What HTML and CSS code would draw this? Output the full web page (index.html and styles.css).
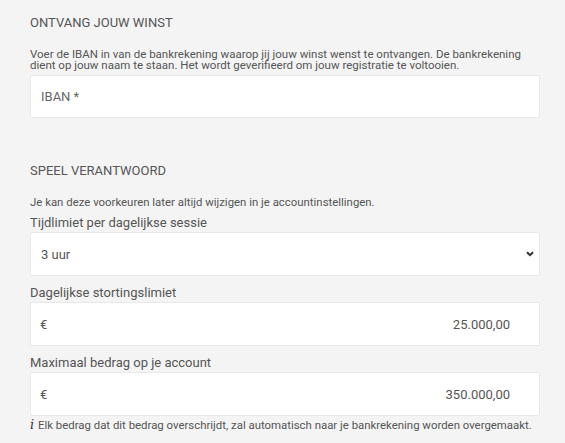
FILE: index.html
```html
<!DOCTYPE html>
<html lang="nl">
<head>
<meta charset="utf-8">
<link rel="stylesheet" href="styles.css">
</head>
<body>
<div class="page">
  <section class="section">
    <h2 class="title">ONTVANG JOUW WINST</h2>
    <p class="desc">Voer de IBAN in van de bankrekening waarop jij jouw winst wenst te ontvangen. De bankrekening dient op jouw naam te staan. Het wordt geverifieerd om jouw registratie te voltooien.</p>
    <div class="field iban"><span class="placeholder">IBAN *</span></div>
  </section>
  <section class="section second">
    <h2 class="title">SPEEL VERANTWOORD</h2>
    <p class="desc one">Je kan deze voorkeuren later altijd wijzigen in je accountinstellingen.</p>
    <label class="label first">Tijdlimiet per dagelijkse sessie</label>
    <div class="field select"><span class="value">3 uur</span>
      <svg class="chev" width="8" height="6" viewBox="0 0 8 6"><path d="M1 1.2l3 3 3-3" fill="none" stroke="#333" stroke-width="2"/></svg>
    </div>
    <label class="label">Dagelijkse stortingslimiet</label>
    <div class="field money"><span class="value">€</span><span class="value">25.000,00</span></div>
    <label class="label">Maximaal bedrag op je account</label>
    <div class="field money"><span class="value">€</span><span class="value">350.000,00</span></div>
    <p class="info"><span class="i">i</span> Elk bedrag dat dit bedrag overschrijdt, zal automatisch naar je bankrekening worden overgemaakt.</p>
  </section>
</div>
</body>
</html>
```
FILE: styles.css
```css
html, body {
  margin: 0;
  padding: 0;
  background: #f4f4f4;
}
body {
  font-family: Roboto, "Liberation Sans", sans-serif;
  color: #555;
}
.page {
  padding: 15px 25px 0 30px;
}
.section {
  display: flex;
  flex-direction: column;
}
.second {
  margin-top: 45px;
}
.title {
  margin: 0;
  font-size: 13px;
  font-weight: 400;
  color: #555;
  line-height: 16px;
}
.desc {
  margin: 18px 0 0;
  max-width: 495px;
  font-size: 11.5px;
  line-height: 11px;
  color: #555;
}
.desc.one {
  max-width: none;
  margin-top: 17px;
  font-size: 11.4px;
  line-height: 13px;
}
.field {
  background: #fff;
  border: 1px solid #e8e8e8;
  border-radius: 2px;
  height: 44px;
  box-sizing: border-box;
  display: flex;
  align-items: center;
  padding: 0 10px;
  font-size: 13px;
  color: #555;
}
.iban {
  margin-top: 4px;
  height: 43px;
}
.placeholder {
  color: #666;
}
.select {
  justify-content: space-between;
  padding-right: 5px;
}
.money {
  justify-content: space-between;
  padding-left: 9px;
  padding-right: 29px;
}
.label {
  font-size: 13px;
  line-height: 15px;
  margin-top: 9px;
  margin-bottom: 2px;
  color: #555;
}
.label.first {
  margin-top: 6px;
}
.info {
  margin: 2px 0 0;
  font-size: 11.4px;
  line-height: 13px;
  color: #555;
}
.i {
  font-family: "DejaVu Serif", serif;
  font-style: italic;
  font-weight: 400;
  font-size: 13px;
  color: #333;
  margin-right: 1px;
}
```
